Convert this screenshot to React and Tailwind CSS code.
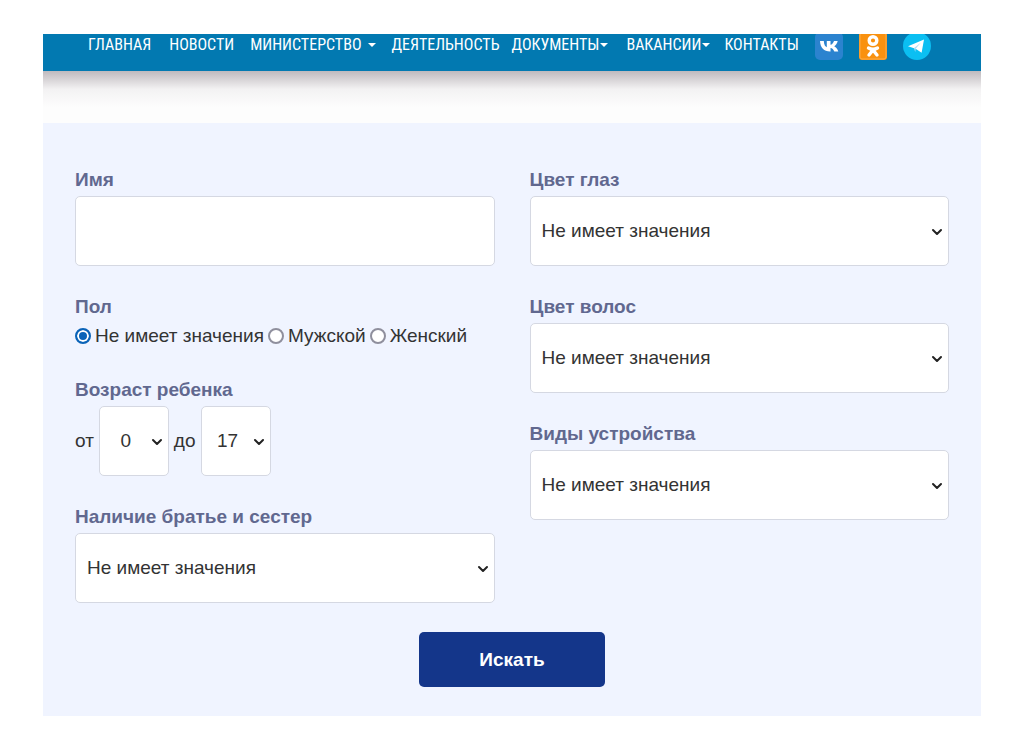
import { useState } from "react";
import { ChevronDown } from "lucide-react";

const ANY = "Не имеет значения";
const AGES = Array.from({ length: 18 }, (_, i) => i);

const menu = [
  { title: "ГЛАВНАЯ", cls: "mr-[18px]" },
  { title: "НОВОСТИ", cls: "mr-4" },
  { title: "МИНИСТЕРСТВО", cls: "mr-4", caret: true, caretCls: "ml-[6px]" },
  { title: "ДЕЯТЕЛЬНОСТЬ", cls: "mr-3" },
  { title: "ДОКУМЕНТЫ", cls: "mr-[18px]", caret: true, caretCls: "ml-px" },
  { title: "ВАКАНСИИ", cls: "mr-[14px]", caret: true, caretCls: "ml-px" },
  { title: "КОНТАКТЫ", cls: "mr-4" },
];

/* =========================
   Social icons
========================= */
function VkIcon() {
  return (
    <svg viewBox="0 2 28 26" className="w-7 h-[26px]" aria-hidden="true">
      <rect width="28" height="28" rx="5" fill="#2b83cf" />
      <path
        d="M4 8h3.800c.2 4 1.600 5.800 3 6.200V8h3.700v3.800c1.500-.2 2.900-1.900 3.500-3.800h3.700c-.5 2.500-2.100 4.400-3.500 5.300 1.400.7 3.200 2.400 4.100 5.200h-4c-.7-1.800-2.100-3.200-3.800-3.400v3.400H14C8.100 18.500 4.200 14.600 4 8z"
        transform="translate(1 1)"
        fill="#fff"
      />
    </svg>
  );
}

function OkIcon() {
  return (
    <svg viewBox="0 2 28 26" className="w-7 h-[26px]" aria-hidden="true">
      <rect width="28" height="28" rx="3" fill="#f9910f" />
      <rect x="1" y="1" width="26" height="26" rx="2" fill="none" stroke="#fbab4a" />
      <g fill="none" stroke="#fff" strokeWidth="3.400" strokeLinecap="round">
        <circle cx="14" cy="8.500" r="3.800" />
        <path d="M9.500 16c2.800 1.600 6.200 1.600 9 0M14 18l-4 5M14 18l4 5" />
      </g>
    </svg>
  );
}

function TelegramIcon() {
  return (
    <svg viewBox="0 2 28 26" className="w-7 h-[26px]" aria-hidden="true">
      <circle cx="14" cy="14" r="14" fill="#0bbff2" />
      <path d="M5 14.200L21 7.500 18.600 20.800 12.600 16.800z" fill="#fff" />
      <path d="M11 16l7-5.500-5.300 6.300-.5 3.200z" fill="#b5dff5" />
    </svg>
  );
}

const socials = [
  { name: "ВКонтакте", Icon: VkIcon },
  { name: "Одноклассники", Icon: OkIcon },
  { name: "Telegram", Icon: TelegramIcon },
];

/* =========================
   Form fields
========================= */
function Select({ id, value, onChange, options, className }) {
  return (
    <div className="relative">
      <select
        id={id}
        value={value}
        onChange={(e) => onChange(e.target.value)}
        className={`appearance-none h-[70px] bg-white border border-[#d5d8e2] rounded-[5px] ${className}`}
      >
        {options.map((o) => (
          <option key={o} value={o}>
            {o}
          </option>
        ))}
      </select>
      <ChevronDown
        className="absolute right-1 top-7 size-4 pointer-events-none text-[#222]"
        strokeWidth={3}
      />
    </div>
  );
}

function SelectField({ id, label }) {
  const [value, setValue] = useState(ANY);
  return (
    <div>
      <label htmlFor={id} className="block mb-1 font-bold text-[#61688f]">
        {label}
      </label>
      <Select
        id={id}
        value={value}
        onChange={setValue}
        options={[ANY]}
        className="w-full pl-[11px] pr-8"
      />
    </div>
  );
}

export default function App() {
  const [name, setName] = useState("");
  const [gender, setGender] = useState(ANY);
  const [ageFrom, setAgeFrom] = useState("0");
  const [ageTo, setAgeTo] = useState("17");

  return (
    <div className="bg-white px-[43px] pt-[34px] pb-6 font-['Liberation_Sans',Arial,sans-serif]">
      <nav className="flex items-start h-[37px] pl-[45px] bg-[#0279b1] overflow-hidden whitespace-nowrap text-white text-base font-['Roboto_Condensed','Liberation_Sans_Narrow',sans-serif]">
        {menu.map((m) => (
          <a key={m.title} href="#" className={`flex items-center leading-[22px] ${m.cls}`}>
            {m.title}
            {m.caret && (
              <span
                className={`border-x-4 border-t-4 border-x-transparent border-t-white ${m.caretCls}`}
              />
            )}
          </a>
        ))}
        <div className="flex gap-4">
          {socials.map(({ name, Icon }) => (
            <a key={name} href="#" aria-label={name}>
              <Icon />
            </a>
          ))}
        </div>
      </nav>
      <div className="h-[52px] bg-linear-to-b from-[#bfbabe] via-[#f3f2f3] via-35% to-[#fdfdfd] to-70%" />

      <form
        onSubmit={(e) => e.preventDefault()}
        className="bg-[#f0f4ff] px-8 pt-[45px] pb-[29px] text-[19px] leading-6 text-[#333]"
      >
        <div className="grid grid-cols-2 gap-x-[35px]">
          <div className="flex flex-col gap-[29px]">
            <div>
              <label htmlFor="name" className="block mb-1 font-bold text-[#61688f]">
                Имя
              </label>
              <input
                id="name"
                type="text"
                value={name}
                onChange={(e) => setName(e.target.value)}
                className="block w-full h-[70px] px-[11px] bg-white border border-[#d5d8e2] rounded-[5px]"
              />
            </div>

            <fieldset>
              <legend className="mb-1 font-bold text-[#61688f]">Пол</legend>
              <div className="flex items-center gap-1 h-[26px] whitespace-nowrap">
                {[ANY, "Мужской", "Женский"].map((g) => (
                  <label key={g} className="flex items-center gap-1">
                    <input
                      type="radio"
                      name="gender"
                      checked={gender === g}
                      onChange={() => setGender(g)}
                      className="appearance-none size-4 rounded-full bg-white border-2 border-[#8f8f9d] checked:border-[#0a63b8] checked:bg-[#0a63b8] checked:shadow-[inset_0_0_0_2px_white]"
                    />
                    {g}
                  </label>
                ))}
              </div>
            </fieldset>

            <fieldset>
              <legend className="mb-1 font-bold text-[#61688f]">Возраст ребенка</legend>
              <div className="flex items-center gap-[5px]">
                <label htmlFor="age-from">от</label>
                <Select
                  id="age-from"
                  value={ageFrom}
                  onChange={setAgeFrom}
                  options={AGES}
                  className="w-[70px] pr-4 text-center"
                />
                <label htmlFor="age-to">до</label>
                <Select
                  id="age-to"
                  value={ageTo}
                  onChange={setAgeTo}
                  options={AGES}
                  className="w-[70px] pr-4 text-center"
                />
              </div>
            </fieldset>

            <SelectField id="siblings" label="Наличие братье и сестер" />
          </div>

          <div className="flex flex-col gap-[29px]">
            <SelectField id="eyes" label="Цвет глаз" />
            <SelectField id="hair" label="Цвет волос" />
            <SelectField id="placement" label="Виды устройства" />
          </div>
        </div>

        <button
          type="submit"
          className="block mx-auto mt-[29px] w-[186px] h-[55px] rounded-[5px] bg-[#14368a] text-white font-bold"
        >
          Искать
        </button>
      </form>
    </div>
  );
}
